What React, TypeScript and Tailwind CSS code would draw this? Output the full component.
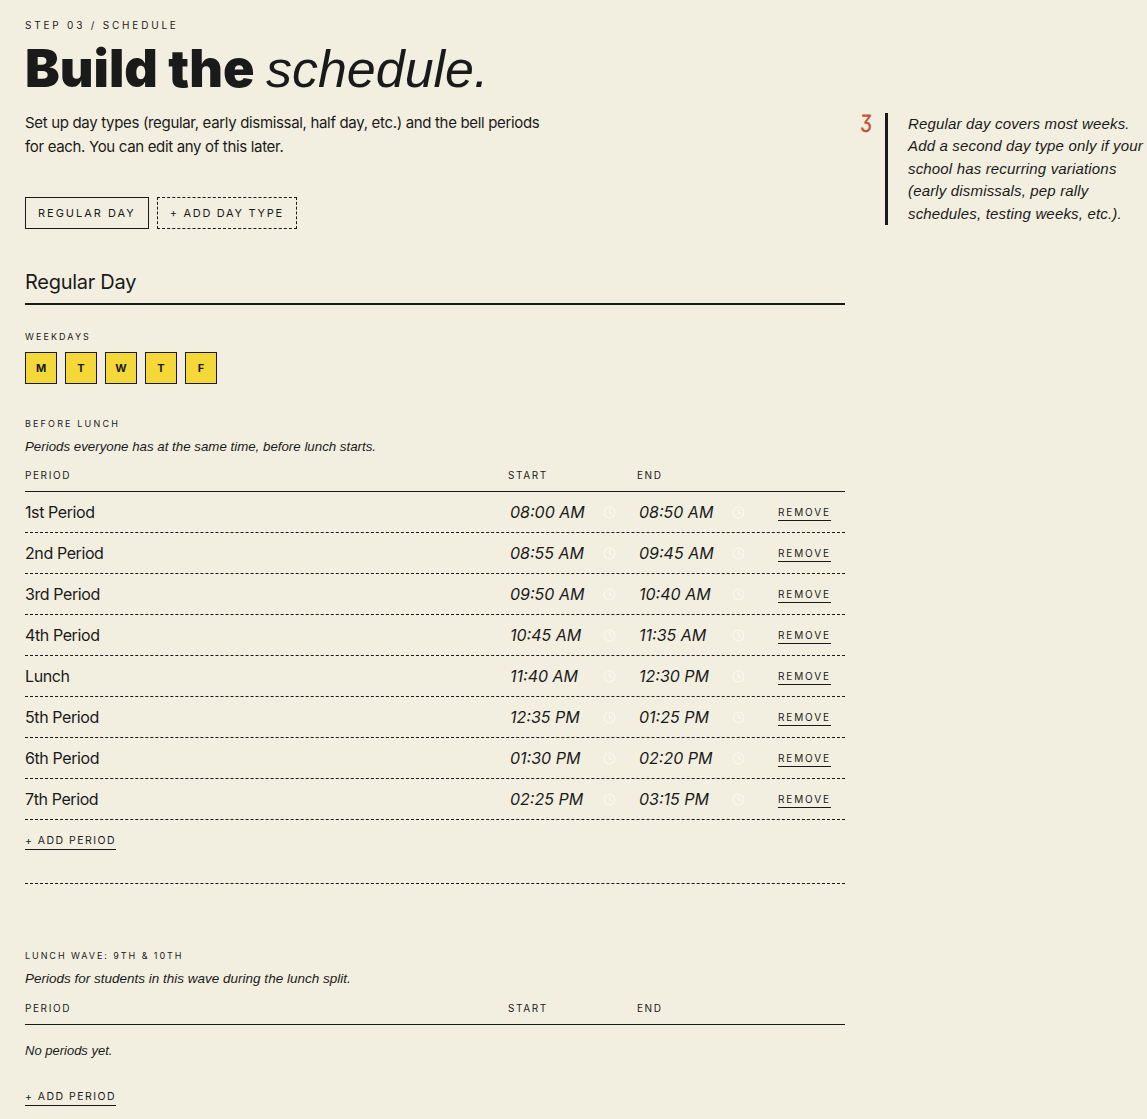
import { Clock } from "lucide-react";

const periods = [
  ["1st Period", "08:00 AM", "08:50 AM"],
  ["2nd Period", "08:55 AM", "09:45 AM"],
  ["3rd Period", "09:50 AM", "10:40 AM"],
  ["4th Period", "10:45 AM", "11:35 AM"],
  ["Lunch", "11:40 AM", "12:30 PM"],
  ["5th Period", "12:35 PM", "01:25 PM"],
  ["6th Period", "01:30 PM", "02:20 PM"],
  ["7th Period", "02:25 PM", "03:15 PM"],
];

const days = ["M", "T", "W", "T", "F"];

function TableHead() {
  return (
    <div className="grid grid-cols-[483px_129px_129px_79px] border-b border-[#1a1a1a] h-[24px] text-[10px] leading-[15px] tracking-[0.16em] text-[#1a1a1a]">
      <span>PERIOD</span>
      <span>START</span>
      <span>END</span>
      <span />
    </div>
  );
}

function TimeCell({ value }: { value: string }) {
  return (
    <div className="flex items-center w-[115px] pl-[2px] justify-between">
      <span className="italic text-[16px] tracking-normal">{value}</span>
      <Clock className="w-[13px] h-[13px] text-white opacity-60 mr-[7px] mt-[1px]" strokeWidth={2} />
    </div>
  );
}

function AddPeriod() {
  return (
    <button className="block text-[10.5px] leading-[14px] tracking-[0.14em] text-[#1a1a1a] border-b border-[#1a1a1a] pb-[1px]">
      + ADD PERIOD
    </button>
  );
}

export default function App() {
  return (
    <div className="min-h-[1119px] w-[1147px] overflow-hidden bg-[#f3efe0] text-[#1a1a1a] font-['Inter',sans-serif] pl-[25px] pt-[18px] flex">
      <main className="w-[820px] shrink-0">
        <p className="text-[10px] leading-[14px] tracking-[0.28em]">STEP 03 / SCHEDULE</p>
        <h1 className="mt-[7px] text-[52px] leading-[60px] font-black">
          Build the <em className="font-['Liberation_Sans'] font-normal ml-[1px]">schedule.</em>
        </h1>
        <p className="mt-[12px] text-[15px] leading-[24px] w-[530px] tracking-[-0.022em]">
          Set up day types (regular, early dismissal, half day, etc.) and the bell periods for each. You can edit any of this later.
        </p>
        <div className="mt-[38px] flex gap-2">
          <button className="h-[32px] px-3 border border-[#1a1a1a] text-[11px] tracking-[0.18em]">REGULAR DAY</button>
          <button className="h-[32px] px-3 border border-dashed border-[#1a1a1a] text-[11px] tracking-[0.155em]">+ ADD DAY TYPE</button>
        </div>
        <h2 className="mt-[39px] text-[20px] leading-[28px] pb-[7px] border-b-2 border-[#1a1a1a] tracking-[-0.014em]">Regular Day</h2>
        <p className="mt-[25px] text-[9px] leading-[14px] tracking-[0.23em]">WEEKDAYS</p>
        <div className="mt-[8px] flex gap-2">
          {days.map((d, i) => (
            <div key={i} className="w-8 h-8 border border-[#1a1a1a] bg-[#f4d738] flex items-center justify-center text-[11px] font-bold">{d}</div>
          ))}
        </div>
        <p className="mt-[33px] text-[9px] leading-[14px] tracking-[0.24em]">BEFORE LUNCH</p>
        <p className="mt-[7px] font-['Liberation_Sans'] italic text-[13.3px] leading-[18px]">Periods everyone has at the same time, before lunch starts.</p>
        <div className="mt-[12px]"><TableHead /></div>
        {periods.map((p) => (
          <div key={p[0]} className="grid grid-cols-[483px_129px_129px_79px] items-center h-[41px] border-b border-dashed border-[#1a1a1a]">
            <span className="text-[16px] tracking-[-0.025em] mb-[1px]">{p[0]}</span>
            <TimeCell value={p[1]} />
            <TimeCell value={p[2]} />
            <button className="justify-self-end mr-[14px] mt-[2px] text-[10px] leading-[14px] tracking-[0.19em] border-b border-[#1a1a1a] pb-[1px]">REMOVE</button>
          </div>
        ))}
        <div className="mt-[14px] flex"><AddPeriod /></div>
        <div className="mt-[33px] border-b border-dashed border-[#1a1a1a]" />
        <p className="mt-[65px] text-[9px] leading-[14px] tracking-[0.215em]">LUNCH WAVE: 9TH &amp; 10TH</p>
        <p className="mt-[7px] font-['Liberation_Sans'] italic text-[13.5px] leading-[18px]">Periods for students in this wave during the lunch split.</p>
        <div className="mt-[13px]"><TableHead /></div>
        <p className="mt-[17px] font-['Liberation_Sans'] italic text-[13px] leading-[18px]">No periods yet.</p>
        <div className="mt-[30px] flex"><AddPeriod /></div>
      </main>
      <aside className="ml-[15px] mt-[95px] flex items-start shrink-0">
        <span className="w-[25px] text-[24px] leading-[22px] font-medium text-[#c4533a] [font-feature-settings:'cv09'] origin-left scale-x-[0.8] -skew-x-3">3</span>
        <p className="w-[265px] h-[112px] border-l-[3px] border-[#1a1a1a] pl-[20px] font-['Liberation_Sans'] italic text-[15px] leading-[22.4px] tracking-[0.011em]">
          Regular day covers most weeks. Add a second day type only if your school has recurring variations (early dismissals, pep rally schedules, testing weeks, etc.).
        </p>
      </aside>
    </div>
  );
}
